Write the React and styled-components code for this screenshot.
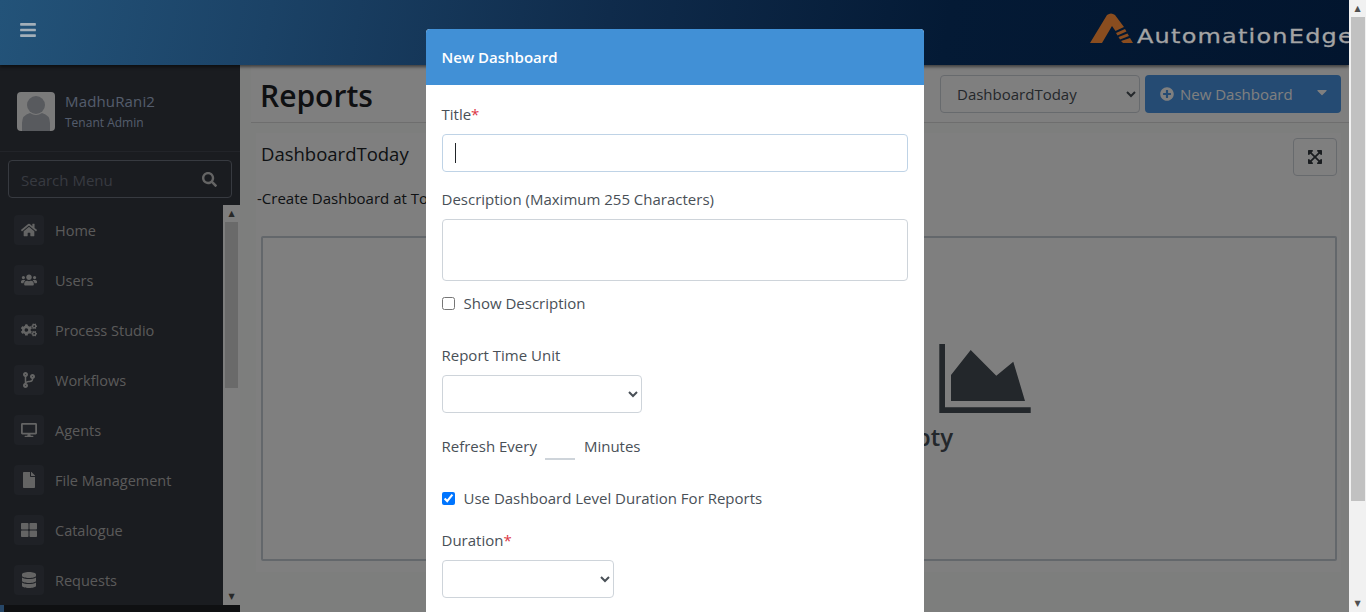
import { createGlobalStyle } from "styled-components";
import styled from "styled-components";
import {
  FaBars,
  FaSearch,
  FaHome,
  FaUsers,
  FaCogs,
  FaCodeBranch,
  FaDesktop,
  FaFile,
  FaThLarge,
  FaDatabase,
  FaPlusCircle,
  FaCaretDown,
  FaExpandArrowsAlt,
} from "react-icons/fa";

const GlobalStyle = createGlobalStyle`
  html, body {
    margin: 0;
    height: 100%;
    overflow: hidden;
  }
  body {
    font-family: "Open Sans", "Noto Sans", sans-serif;
    font-size: 15px;
    color: #212529;
  }
  * {
    box-sizing: border-box;
  }
`;

const menuItems = [
  { label: "Home", icon: <FaHome /> },
  { label: "Users", icon: <FaUsers /> },
  { label: "Process Studio", icon: <FaCogs /> },
  { label: "Workflows", icon: <FaCodeBranch /> },
  { label: "Agents", icon: <FaDesktop /> },
  { label: "File Management", icon: <FaFile /> },
  { label: "Catalogue", icon: <FaThLarge /> },
  { label: "Requests", icon: <FaDatabase /> },
];

const App = () => {
  return (
    <Shell>
      <GlobalStyle />
      <Page>
        <TopBar>
          <MenuToggle>
            <FaBars />
          </MenuToggle>
          <Logo>
            <svg width="44" height="31" viewBox="0 0 44 31">
              <path d="M0 30 L17 2 Q21 -1 25 2 L34 14 L25.5 18 L22 13 L12 30 Z" fill="#8a4d1f" />
              <path d="M26 20 L35 16 L36.5 18.5 L27.5 22.5 Z M28.5 24 L37.5 20.5 L39 23 L30 26.5 Z M31 28 L40 25 L43 30 L33 30 Z" fill="#8a4d1f" />
            </svg>
            <LogoText>AutomationEdge</LogoText>
          </Logo>
        </TopBar>
        <Body>
          <Sidebar>
            <UserPanel>
              <Avatar>
                <svg width="38" height="39" viewBox="0 0 38 39">
                  <circle cx="19" cy="13" r="9" fill="#b0b4bc" />
                  <path d="M5 39 V31 Q5 23 13 21 Q19 25 25 21 Q33 23 33 31 V39 Z" fill="#b0b4bc" />
                </svg>
              </Avatar>
              <UserInfo>
                <UserName>MadhuRani2</UserName>
                <UserRole>Tenant Admin</UserRole>
              </UserInfo>
            </UserPanel>
            <SearchWrap>
              <SearchBox>
                <SearchInput placeholder="Search Menu" />
                <FaSearch />
              </SearchBox>
            </SearchWrap>
            <MenuArea>
              <MenuList>
                {menuItems.map((item) => (
                  <MenuRow key={item.label}>
                    <MenuIcon>{item.icon}</MenuIcon>
                    {item.label}
                  </MenuRow>
                ))}
              </MenuList>
              <SideScroll>
                <ScrollArrow $dark>▲</ScrollArrow>
                <SideThumb />
                <ScrollArrow $dark>▼</ScrollArrow>
              </SideScroll>
            </MenuArea>
            <SidebarFoot>
              <FootMark />
            </SidebarFoot>
          </Sidebar>
          <Main>
            <TitleBar>
              <PageTitle>Reports</PageTitle>
              <TitleActions>
                <DashSelect defaultValue="DashboardToday">
                  <option>DashboardToday</option>
                </DashSelect>
                <NewButton>
                  <FaPlusCircle />
                  <span>New Dashboard</span>
                  <Caret>
                    <FaCaretDown />
                  </Caret>
                </NewButton>
              </TitleActions>
            </TitleBar>
            <Card>
              <CardHead>
                <CardTitle>DashboardToday</CardTitle>
                <ExpandButton>
                  <FaExpandArrowsAlt />
                </ExpandButton>
              </CardHead>
              <CardNote>-Create Dashboard at Today</CardNote>
              <EmptyBox>
                <EmptyIcon width="92" height="69" viewBox="0 0 92 69">
                  <path d="M0.3 0 H6 V63.3 H91.7 V69 H0.3 Z" />
                  <path d="M12 57 V31 L31.7 6 L57.3 31.7 L74.3 17.7 L86 57 Z" />
                </EmptyIcon>
                <EmptyText>Dashboard is Empty</EmptyText>
              </EmptyBox>
            </Card>
          </Main>
        </Body>
        <Backdrop />
        <ModalLayer>
          <Modal>
            <ModalHead>New Dashboard</ModalHead>
            <ModalBody>
              <FieldLabel>
                Title<Required>*</Required>
              </FieldLabel>
              <InputWrap>
                <TextInput $focus />
                <TextCaret />
              </InputWrap>
              <FieldLabel $top={17}>Description (Maximum 255 Characters)</FieldLabel>
              <TextArea />
              <CheckRow $top={12}>
                <input type="checkbox" />
                Show Description
              </CheckRow>
              <FieldLabel $top={32}>Report Time Unit</FieldLabel>
              <FormSelect $width={200} />
              <RefreshRow>
                Refresh Every
                <MinutesInput />
                Minutes
              </RefreshRow>
              <CheckRow $top={28}>
                <input type="checkbox" defaultChecked />
                Use Dashboard Level Duration For Reports
              </CheckRow>
              <FieldLabel $top={22}>
                Duration<Required>*</Required>
              </FieldLabel>
              <FormSelect $width={172} />
            </ModalBody>
          </Modal>
        </ModalLayer>
      </Page>
      <PageScroll>
        <ScrollArrow>▲</ScrollArrow>
        <PageThumb />
        <ScrollArrow>▼</ScrollArrow>
      </PageScroll>
    </Shell>
  );
};

const Shell = styled.div`
  display: flex;
  width: 1366px;
  height: 612px;
  overflow: hidden;
`;

const Page = styled.div`
  position: relative;
  width: 1349px;
  height: 612px;
  display: flex;
  flex-direction: column;
  overflow: hidden;
  background: #fafdfa;
`;

const TopBar = styled.header`
  position: relative;
  z-index: 20;
  flex: 0 0 65px;
  display: flex;
  align-items: center;
  justify-content: space-between;
  padding: 0 0 5px 19px;
  background: linear-gradient(100deg, #235379 0%, #1b4266 20%, #0f2b4b 45%, #041a35 70%, #02152e 100%);
  box-shadow: 0 2px 3px rgba(0, 0, 0, 0.5);
`;

const MenuToggle = styled.div`
  display: flex;
  font-size: 18px;
  color: #a3afb9;
`;

const Logo = styled.div`
  align-self: flex-start;
  display: flex;
  align-items: flex-start;
  flex: 0 0 259px;
  gap: 3px;
  height: 36px;
  margin-top: 13px;
  overflow: hidden;
`;

const LogoText = styled.span`
  margin-top: 13px;
  font-family: "DejaVu Sans", sans-serif;
  font-size: 20px;
  line-height: 20px;
  letter-spacing: 1px;
  color: #a4a4a4;
  -webkit-text-stroke: 0.3px #a4a4a4;
  white-space: nowrap;
  transform: scaleX(1.2);
  transform-origin: left center;
`;

const Body = styled.div`
  flex: 1;
  display: flex;
  min-height: 0;
`;

const Sidebar = styled.aside`
  width: 240px;
  min-width: 240px;
  flex: 0 0 240px;
  display: flex;
  flex-direction: column;
  background: #353840;
`;

const UserPanel = styled.div`
  flex: 0 0 87px;
  display: flex;
  align-items: center;
  gap: 10px;
  padding: 7px 0 0 17px;
  border-bottom: 1px solid #454952;
`;

const Avatar = styled.div`
  display: flex;
  width: 38px;
  height: 39px;
  border-radius: 4px;
  overflow: hidden;
  background: #f4f4f4;
`;

const UserInfo = styled.div`
  display: flex;
  flex-direction: column;
`;

const UserName = styled.div`
  margin: -2px 0 2px;
  font-size: 15px;
  line-height: 22px;
  letter-spacing: 0.15px;
  color: #a8b8d8;
`;

const UserRole = styled.div`
  font-size: 12px;
  line-height: 18px;
  color: #a8b8d8;
`;

const SearchWrap = styled.div`
  flex: 0 0 53px;
  padding: 8px 8px 7px;
`;

const SearchBox = styled.div`
  display: flex;
  align-items: center;
  height: 38px;
  padding: 0 14px 0 12px;
  border: 1px solid #6f7480;
  border-radius: 4px;
  font-size: 15px;
  color: #c9c9c9;
`;

const SearchInput = styled.input`
  flex: 1;
  width: 100%;
  min-width: 0;
  border: 0;
  padding: 1px 0 0;
  outline: 0;
  background: transparent;
  font: inherit;
  &::placeholder {
    color: #6f7480;
    opacity: 1;
  }
`;

const MenuArea = styled.div`
  flex: 0 0 400px;
  display: flex;
  justify-content: space-between;
  overflow: hidden;
`;

const MenuList = styled.nav`
  display: flex;
  flex-direction: column;
  gap: 20px;
  padding: 10px 0 0 14px;
`;

const MenuRow = styled.div`
  display: flex;
  align-items: center;
  gap: 11px;
  height: 30px;
  font-size: 14.5px;
  color: #b4b4b4;
`;

const MenuIcon = styled.span`
  display: flex;
  align-items: center;
  justify-content: center;
  width: 30px;
  height: 30px;
  border-radius: 4px;
  font-size: 16px;
  background: #3e434c;
  color: #c8c8c8;
`;

const SideScroll = styled.div`
  flex: 0 0 17px;
  display: flex;
  flex-direction: column;
  background: #fdfdfd;
`;

const SideThumb = styled.div`
  height: 166px;
  margin: 0 2px;
  background: #d4d4d4;
`;

const ScrollArrow = styled.div`
  flex: 0 0 17px;
  display: flex;
  align-items: center;
  justify-content: center;
  font-family: "DejaVu Sans", sans-serif;
  font-size: 8px;
  color: #505050;
  &:last-child {
    margin-top: auto;
  }
`;

const SidebarFoot = styled.div`
  flex: 1;
  background: #1e2024;
`;

const FootMark = styled.div`
  width: 4px;
  height: 100%;
  background: #4f8fd0;
`;

const Main = styled.main`
  flex: 1;
  min-width: 0;
  padding-left: 11px;
`;

const TitleBar = styled.div`
  display: flex;
  align-items: center;
  justify-content: space-between;
  height: 58px;
  padding: 4px 8px 0 9px;
  border-bottom: 1px solid #dcdcdc;
  background: #fff;
`;

const PageTitle = styled.h1`
  margin: 0;
  font-size: 30px;
  line-height: 38px;
  font-weight: 600;
  color: #1d2024;
`;

const TitleActions = styled.div`
  display: flex;
  align-items: center;
  gap: 5px;
  margin-bottom: 4px;
`;

const DashSelect = styled.select`
  width: 200px;
  height: 38px;
  padding: 0 12px;
  border: 1px solid #ced4da;
  border-radius: 4px;
  background: #fff;
  font: inherit;
  font-size: 15px;
  color: #495057;
`;

const NewButton = styled.button`
  display: flex;
  align-items: center;
  width: 196px;
  height: 38px;
  padding: 0 11px 0 15px;
  border: 0;
  border-radius: 4px;
  background: #4a96e6;
  font: inherit;
  font-size: 15px;
  color: #fff;
  & > svg {
    font-size: 14px;
    margin-right: 6px;
  }
`;

const Caret = styled.span`
  display: flex;
  margin: -4px 0 0 auto;
  font-size: 16px;
`;

const Card = styled.section`
  margin: 10px 8px 0 5px;
  height: 439px;
  padding: 5px 4px 0 5px;
  background: #fff;
`;

const CardHead = styled.div`
  display: flex;
  align-items: center;
  justify-content: space-between;
  height: 38px;
`;

const CardTitle = styled.h2`
  margin: -6px 0 0;
  font-size: 18.5px;
  font-weight: 400;
  line-height: 28px;
`;

const ExpandButton = styled.button`
  display: flex;
  align-items: center;
  justify-content: center;
  width: 44px;
  height: 38px;
  border: 1px solid #ced4da;
  border-radius: 4px;
  background: #fff;
  font-size: 16px;
  color: #343a40;
`;

const CardNote = styled.div`
  margin: 11px 0 0 -4px;
  font-size: 15px;
  line-height: 22px;
`;

const EmptyBox = styled.div`
  display: flex;
  flex-direction: column;
  align-items: flex-end;
  height: 325px;
  margin-top: 27px;
  border: 2px solid #c6ced6;
  border-radius: 2px;
`;

const EmptyIcon = styled.svg`
  display: block;
  margin: 106px 304px 0 0;
  fill: #464e56;
`;

const EmptyText = styled.div`
  margin: 8px 382px 0 0;
  font-size: 24px;
  line-height: 32px;
  font-weight: 600;
  color: #464e56;
`;

const Backdrop = styled.div`
  position: absolute;
  inset: 0;
  z-index: 10;
  background: rgba(0, 0, 0, 0.5);
`;

const ModalLayer = styled.div`
  position: absolute;
  inset: 0;
  z-index: 30;
  display: flex;
  justify-content: center;
  padding-top: 29px;
  overflow: hidden;
`;

const Modal = styled.div`
  width: 498px;
  height: 640px;
  border-radius: 4px 4px 0 0;
  background: #fff;
  overflow: hidden;
`;

const ModalHead = styled.div`
  display: flex;
  align-items: center;
  height: 56px;
  padding-left: 16px;
  background: #4190d6;
  font-size: 15px;
  font-weight: 600;
  color: #fff;
`;

const ModalBody = styled.div`
  display: flex;
  flex-direction: column;
  align-items: flex-start;
  padding: 19px 16px 0;
  color: #495057;
`;

const FieldLabel = styled.label`
  margin-top: ${(p) => p.$top || 0}px;
  margin-bottom: 10px;
  font-size: 15px;
  line-height: 20px;
`;

const Required = styled.span`
  color: #dc3545;
`;

const InputWrap = styled.div`
  position: relative;
  width: 100%;
`;

const TextInput = styled.input`
  display: block;
  width: 100%;
  height: 38px;
  border: 1px solid ${(p) => (p.$focus ? "#bfd3e6" : "#ced4da")};
  border-radius: 4px;
  outline: 0;
`;

const TextCaret = styled.span`
  position: absolute;
  left: 13px;
  top: 9px;
  width: 1px;
  height: 20px;
  background: #212529;
`;

const TextArea = styled.textarea`
  display: block;
  width: 100%;
  height: 62px;
  border: 1px solid #ced4da;
  border-radius: 4px;
  resize: none;
  outline: 0;
`;

const CheckRow = styled.label`
  display: flex;
  align-items: center;
  gap: 9px;
  margin-top: ${(p) => p.$top || 0}px;
  font-size: 15px;
  line-height: 20px;
  & > input {
    margin: 0;
    width: 13px;
    height: 13px;
  }
`;

const FormSelect = styled.select`
  width: ${(p) => p.$width}px;
  height: 38px;
  border: 1px solid #ced4da;
  border-radius: 4px;
  background: #fff;
  color: #495057;
`;

const RefreshRow = styled.div`
  display: flex;
  align-items: center;
  gap: 9px;
  height: 28px;
  margin-top: 19px;
  font-size: 15px;
`;

const MinutesInput = styled.input`
  width: 30px;
  height: 28px;
  margin-left: -1px;
  border: 0;
  border-bottom: 2px solid #ced4da;
  outline: 0;
`;

const PageScroll = styled.div`
  flex: 0 0 17px;
  display: flex;
  flex-direction: column;
  background: #f1f1f1;
`;

const PageThumb = styled.div`
  height: 484px;
  margin: 0 1px 0 2px;
  background: #c1c1c1;
`;

export default App;
